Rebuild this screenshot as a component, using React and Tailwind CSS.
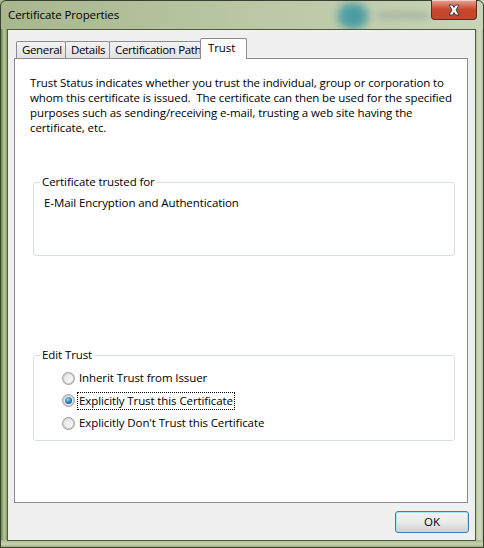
import React from "react";

const font = { fontFamily: '"Open Sans", "Noto Sans", sans-serif' };
const txt = "text-[11.5px] tracking-[-0.1px] text-black";

function Tab({ label, selected, w }) {
  if (selected) {
    return (
      <div
        className={"relative z-10 h-[21px] -mb-px border border-b-0 border-[#898c95] bg-white pl-[7px] pt-[1px] leading-[16px] rounded-t-[2px] " + txt}
        style={{ width: w }}
      >
        {label}
      </div>
    );
  }
  return (
    <div
      className="h-[17px] border border-b-0 border-[#898c95] bg-gradient-to-b from-[#f3f3f3] to-[#e1e1e1] pl-[5px] leading-[16px] rounded-t-[2px] -mr-px whitespace-nowrap text-[11.5px] tracking-[-0.35px] text-black"
      style={{ width: w }}
    >
      {label}
    </div>
  );
}

function Radio({ checked, label, focus }) {
  return (
    <div className="flex items-center h-[22.5px]">
      <div className="w-[13px] h-[13px] rounded-full border border-[#9c9c9c] bg-gradient-to-br from-[#f2f2f2] to-[#d4d4d4] flex items-center justify-center">
        <div className="w-[11px] h-[11px] rounded-full border border-[#c9c9c9] bg-gradient-to-br from-[#e4e4e4] to-[#fbfbfb] flex items-center justify-center">
          {checked && (
            <div className="w-[7px] h-[7px] rounded-full bg-[radial-gradient(circle_at_40%_35%,#8edaf8,#1a7cb8_55%,#0b3f6c)]" />
          )}
        </div>
      </div>
      <div
        className={
          "ml-[3px] px-[1px] leading-[16px] " +
          txt +
          (focus ? " outline outline-1 outline-dotted outline-black" : "")
        }
      >
        {label}
      </div>
    </div>
  );
}

function GroupBox({ title, children, className }) {
  return (
    <div className={"relative border border-[#d5dfe5] rounded-[3px] " + className}>
      <div className={"absolute -top-[9px] left-[6px] bg-white px-[2px] leading-[16px] " + txt}>
        {title}
      </div>
      {children}
    </div>
  );
}

export default function App() {
  return (
    <div className="relative w-[484px] h-[548px] overflow-hidden bg-[#b3c09b]" style={font}>
      {/* glass backdrop */}
      <div className="absolute inset-0 bg-gradient-to-r from-[#a8b78d] via-[#bac6a4] to-[#c8d3b8]" />
      <div className="absolute left-[338px] top-[3px] w-[30px] h-[26px] rounded-full bg-[#3f98a2] blur-[4px] opacity-90" />
      <div className="absolute left-[378px] top-[12px] w-[50px] h-[7px] bg-[#98a699] blur-[3px] opacity-60" />
      {/* side / bottom frame shading */}
      <div className="absolute left-0 top-[29px] bottom-0 w-[8px] bg-gradient-to-r from-[#4f6a2f] via-[#b9c99a] to-[#7c9356]" />
      <div className="absolute right-0 top-[29px] bottom-0 w-[8px] bg-gradient-to-r from-[#b8c6a2] via-[#d3dcc5] to-[#a4b48b]" />
      <div className="absolute left-0 right-0 bottom-0 h-[8px] bg-gradient-to-b from-[#a6b889] via-[#c7d3b1] to-[#8da26b]" />
      <div className="absolute inset-0 border border-[#39402f] rounded-t-[6px]" />

      <div className="relative flex flex-col h-full">
        {/* title bar */}
        <div className="relative flex h-[29px] items-start">
          <div className="pl-[8px] pt-[7px] leading-[16px] text-[11.5px] tracking-[-0.1px] text-black">
            Certificate Properties
          </div>
          <div className="ml-auto mr-[7px] w-[46px] h-[20px] rounded-b-[4px] border border-t-0 border-[#5a2a22] bg-gradient-to-b from-[#e6a392] via-[#c9452b] to-[#c0482e] flex items-center justify-center shadow-[inset_0_1px_0_rgba(255,255,255,0.5)]">
            <svg width="14" height="12" viewBox="0 0 14 12">
              <path
                d="M2 1 L5.5 1 L7 3.5 L8.5 1 L12 1 L9 6 L12 11 L8.5 11 L7 8.5 L5.5 11 L2 11 L5 6 Z"
                fill="#ffffff"
                stroke="#3c3c4a"
                strokeWidth="1"
                strokeLinejoin="round"
              />
            </svg>
          </div>
        </div>

        {/* client */}
        <div className="ml-[7px] mr-[8px] mb-[7px] flex-1 flex flex-col border border-[#4d5a3c] bg-[#f0f0f0]">
          <div className="flex flex-col pl-[6px] pr-[7px] pt-[7px]">
            {/* tabs */}
            <div className="flex items-end pl-[2px] h-[21px]">
              <Tab label="General" w={50} />
              <Tab label="Details" w={45} />
              <Tab label="Certification Path" w={92} />
              <Tab label="Trust" w={47} selected />
            </div>
            {/* panel */}
            <div className="h-[445px] border border-[#898c95] bg-white flex flex-col pl-[15px] pr-[12px] pt-[16px]">
              <p className={"leading-[15px] " + txt}>
                Trust Status indicates whether you trust the individual, group or corporation to whom this certificate is issued.&nbsp; The certificate can then be used for the specified purposes such as sending/receiving e-mail, trusting a web site having the certificate, etc.
              </p>
              <GroupBox title="Certificate trusted for" className="mt-[47px] h-[74px] ml-[3px]">
                <div className={"pl-[10px] pt-[12px] leading-[16px] " + txt}>
                  E-Mail Encryption and Authentication
                </div>
              </GroupBox>
              <GroupBox title="Edit Trust" className="mt-[99px] h-[86px] ml-[3px]">
                <div className="pl-[28px] pt-[11px] flex flex-col">
                  <Radio label="Inherit Trust from Issuer" />
                  <Radio label="Explicitly Trust this Certificate" checked focus />
                  <Radio label="Explicitly Don't Trust this Certificate" />
                </div>
              </GroupBox>
            </div>
          </div>
          <div className="flex justify-end pr-[6px] pt-[8px]">
            <button className={"w-[74px] h-[22px] rounded-[3px] border border-[#3c7fb1] bg-gradient-to-b from-[#f2f2f2] via-[#ebebeb] to-[#cfcfcf] shadow-[inset_0_0_0_1px_#a9e4f9] leading-[16px] " + txt}>
              OK
            </button>
          </div>
        </div>
      </div>
    </div>
  );
}
